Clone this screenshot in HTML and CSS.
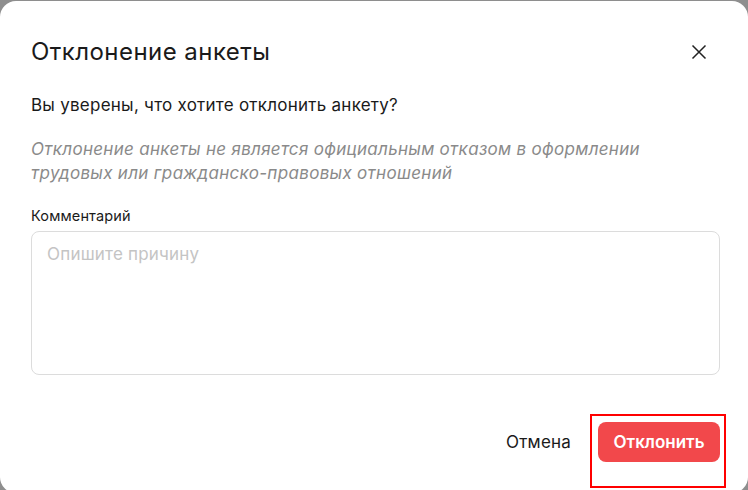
FILE: index.html
```html
<!DOCTYPE html>
<html lang="ru">
<head>
<meta charset="utf-8">
<link rel="stylesheet" href="styles.css">
</head>
<body>
<div class="modal">
  <div class="header">
    <h1 class="title">Отклонение анкеты</h1>
    <button class="close" aria-label="Закрыть">
      <svg width="16" height="16" viewBox="0 0 16 16"><path d="M1.5 1.5L14.5 14.5M14.5 1.5L1.5 14.5" stroke="#222" stroke-width="1.5" fill="none"/></svg>
    </button>
  </div>
  <p class="question">Вы уверены, что хотите отклонить анкету?</p>
  <p class="note">Отклонение анкеты не является официальным отказом в оформлении трудовых или гражданско-правовых отношений</p>
  <label class="label">Комментарий</label>
  <textarea class="field" placeholder="Опишите причину"></textarea>
  <div class="footer">
    <button class="cancel">Отмена</button>
    <div class="highlight"><button class="reject">Отклонить</button></div>
  </div>
</div>
</body>
</html>
```
FILE: styles.css
```css
html, body { margin: 0; padding: 0; }
body {
  background: #8e8e8e;
  font-family: Inter, "Noto Sans", sans-serif;
  width: 748px;
  height: 490px;
  overflow: hidden;
}
.modal {
  box-sizing: border-box;
  margin-top: 1px;
  height: 492px;
  background: #fff;
  border-radius: 16px;
  padding: 36px 29px 0 31px;
  display: flex;
  flex-direction: column;
}
.header {
  display: flex;
  align-items: center;
  justify-content: space-between;
}
.title {
  margin: 0;
  font-size: 24px;
  font-weight: 400;
  line-height: 30px;
  letter-spacing: 0.45px;
  color: #1a1a1a;
}
.close {
  border: 0;
  background: none;
  padding: 0;
  margin-right: 12px;
  width: 16px;
  height: 16px;
  display: flex;
}
.question {
  margin: 26px 0 0;
  font-size: 17px;
  line-height: 24px;
  letter-spacing: 0.25px;
  color: #1a1a1a;
}
.note {
  margin: 20px 0 0;
  max-width: 640px;
  font-size: 17px;
  line-height: 24px;
  font-style: italic;
  color: #8a8a8a;
  letter-spacing: 0.3px;
}
.label {
  margin-top: 21px;
  font-size: 14.5px;
  line-height: 20px;
  letter-spacing: 0.15px;
  color: #1a1a1a;
}
.field {
  box-sizing: border-box;
  margin-top: 5px;
  width: 689px;
  height: 144px;
  border: 1px solid #dcdcdc;
  border-radius: 8px;
  padding: 10px 15px;
  font-family: inherit;
  font-size: 17px;
  line-height: 24px;
  letter-spacing: 0.2px;
  resize: none;
  outline: none;
}
.field::placeholder { color: #c4c4c4; }
.footer {
  display: flex;
  justify-content: flex-end;
  align-items: flex-start;
  gap: 19px;
  margin-top: 39px;
  margin-right: -7px;
}
.cancel {
  border: 0;
  background: none;
  font-family: inherit;
  font-size: 17px;
  line-height: 20px;
  letter-spacing: 0.2px;
  color: #1a1a1a;
  padding: 0;
  margin-top: 18px;
}
.highlight {
  border: 2px solid #f00;
  padding: 6px 4px 24px 6px;
}
.reject {
  display: block;
  border: 0;
  background: #f2484b;
  color: #fff;
  font-family: inherit;
  font-size: 17px;
  font-weight: 600;
  border-radius: 8px;
  height: 40px;
  width: 122px;
  padding: 0;
}
```
